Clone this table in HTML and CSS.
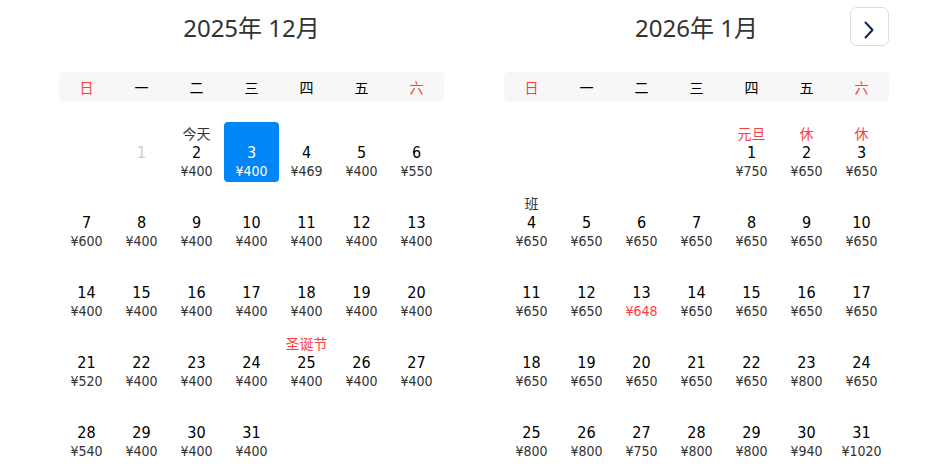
FILE: index.html
```html
<!DOCTYPE html>
<html lang="zh-CN">
<head>
<meta charset="utf-8">
<title>日历</title>
<link rel="stylesheet" href="styles.css">
</head>
<body>
<div class="page">
  <section class="cal">
    <h2 class="title">2025年 12月</h2>
    <div class="week">
      <span class="red">日</span><span>一</span><span>二</span><span>三</span><span>四</span><span>五</span><span class="red">六</span>
    </div>
    <div class="grid">
      <div class="cell empty"></div>
      <div class="cell past"><span class="tag"></span><span class="num">1</span><span class="price"></span></div>
      <div class="cell"><span class="tag">今天</span><span class="num">2</span><span class="price">¥400</span></div>
      <div class="cell sel"><span class="tag"></span><span class="num">3</span><span class="price">¥400</span></div>
      <div class="cell"><span class="tag"></span><span class="num">4</span><span class="price">¥469</span></div>
      <div class="cell"><span class="tag"></span><span class="num">5</span><span class="price">¥400</span></div>
      <div class="cell"><span class="tag"></span><span class="num">6</span><span class="price">¥550</span></div>

      <div class="cell"><span class="tag"></span><span class="num">7</span><span class="price">¥600</span></div>
      <div class="cell"><span class="tag"></span><span class="num">8</span><span class="price">¥400</span></div>
      <div class="cell"><span class="tag"></span><span class="num">9</span><span class="price">¥400</span></div>
      <div class="cell"><span class="tag"></span><span class="num">10</span><span class="price">¥400</span></div>
      <div class="cell"><span class="tag"></span><span class="num">11</span><span class="price">¥400</span></div>
      <div class="cell"><span class="tag"></span><span class="num">12</span><span class="price">¥400</span></div>
      <div class="cell"><span class="tag"></span><span class="num">13</span><span class="price">¥400</span></div>

      <div class="cell"><span class="tag"></span><span class="num">14</span><span class="price">¥400</span></div>
      <div class="cell"><span class="tag"></span><span class="num">15</span><span class="price">¥400</span></div>
      <div class="cell"><span class="tag"></span><span class="num">16</span><span class="price">¥400</span></div>
      <div class="cell"><span class="tag"></span><span class="num">17</span><span class="price">¥400</span></div>
      <div class="cell"><span class="tag"></span><span class="num">18</span><span class="price">¥400</span></div>
      <div class="cell"><span class="tag"></span><span class="num">19</span><span class="price">¥400</span></div>
      <div class="cell"><span class="tag"></span><span class="num">20</span><span class="price">¥400</span></div>

      <div class="cell"><span class="tag"></span><span class="num">21</span><span class="price">¥520</span></div>
      <div class="cell"><span class="tag"></span><span class="num">22</span><span class="price">¥400</span></div>
      <div class="cell"><span class="tag"></span><span class="num">23</span><span class="price">¥400</span></div>
      <div class="cell"><span class="tag"></span><span class="num">24</span><span class="price">¥400</span></div>
      <div class="cell"><span class="tag red">圣诞节</span><span class="num">25</span><span class="price">¥400</span></div>
      <div class="cell"><span class="tag"></span><span class="num">26</span><span class="price">¥400</span></div>
      <div class="cell"><span class="tag"></span><span class="num">27</span><span class="price">¥400</span></div>

      <div class="cell"><span class="tag"></span><span class="num">28</span><span class="price">¥540</span></div>
      <div class="cell"><span class="tag"></span><span class="num">29</span><span class="price">¥400</span></div>
      <div class="cell"><span class="tag"></span><span class="num">30</span><span class="price">¥400</span></div>
      <div class="cell"><span class="tag"></span><span class="num">31</span><span class="price">¥400</span></div>
    </div>
  </section>

  <section class="cal">
    <h2 class="title">2026年 1月</h2>
    <button class="next" type="button" aria-label="下个月">
      <svg width="39" height="39" viewBox="0 0 39 39"><polyline points="15.5,15.5 22.5,23 15.5,30.5" fill="none" stroke="#0f294d" stroke-width="2" stroke-linecap="round" stroke-linejoin="round"/></svg>
    </button>
    <div class="week">
      <span class="red">日</span><span>一</span><span>二</span><span>三</span><span>四</span><span>五</span><span class="red">六</span>
    </div>
    <div class="grid">
      <div class="cell empty"></div>
      <div class="cell empty"></div>
      <div class="cell empty"></div>
      <div class="cell empty"></div>
      <div class="cell"><span class="tag red">元旦</span><span class="num">1</span><span class="price">¥750</span></div>
      <div class="cell"><span class="tag red">休</span><span class="num">2</span><span class="price">¥650</span></div>
      <div class="cell"><span class="tag red">休</span><span class="num">3</span><span class="price">¥650</span></div>

      <div class="cell"><span class="tag">班</span><span class="num">4</span><span class="price">¥650</span></div>
      <div class="cell"><span class="tag"></span><span class="num">5</span><span class="price">¥650</span></div>
      <div class="cell"><span class="tag"></span><span class="num">6</span><span class="price">¥650</span></div>
      <div class="cell"><span class="tag"></span><span class="num">7</span><span class="price">¥650</span></div>
      <div class="cell"><span class="tag"></span><span class="num">8</span><span class="price">¥650</span></div>
      <div class="cell"><span class="tag"></span><span class="num">9</span><span class="price">¥650</span></div>
      <div class="cell"><span class="tag"></span><span class="num">10</span><span class="price">¥650</span></div>

      <div class="cell"><span class="tag"></span><span class="num">11</span><span class="price">¥650</span></div>
      <div class="cell"><span class="tag"></span><span class="num">12</span><span class="price">¥650</span></div>
      <div class="cell"><span class="tag"></span><span class="num">13</span><span class="price low">¥648</span></div>
      <div class="cell"><span class="tag"></span><span class="num">14</span><span class="price">¥650</span></div>
      <div class="cell"><span class="tag"></span><span class="num">15</span><span class="price">¥650</span></div>
      <div class="cell"><span class="tag"></span><span class="num">16</span><span class="price">¥650</span></div>
      <div class="cell"><span class="tag"></span><span class="num">17</span><span class="price">¥650</span></div>

      <div class="cell"><span class="tag"></span><span class="num">18</span><span class="price">¥650</span></div>
      <div class="cell"><span class="tag"></span><span class="num">19</span><span class="price">¥650</span></div>
      <div class="cell"><span class="tag"></span><span class="num">20</span><span class="price">¥650</span></div>
      <div class="cell"><span class="tag"></span><span class="num">21</span><span class="price">¥650</span></div>
      <div class="cell"><span class="tag"></span><span class="num">22</span><span class="price">¥650</span></div>
      <div class="cell"><span class="tag"></span><span class="num">23</span><span class="price">¥800</span></div>
      <div class="cell"><span class="tag"></span><span class="num">24</span><span class="price">¥650</span></div>

      <div class="cell"><span class="tag"></span><span class="num">25</span><span class="price">¥800</span></div>
      <div class="cell"><span class="tag"></span><span class="num">26</span><span class="price">¥800</span></div>
      <div class="cell"><span class="tag"></span><span class="num">27</span><span class="price">¥750</span></div>
      <div class="cell"><span class="tag"></span><span class="num">28</span><span class="price">¥800</span></div>
      <div class="cell"><span class="tag"></span><span class="num">29</span><span class="price">¥800</span></div>
      <div class="cell"><span class="tag"></span><span class="num">30</span><span class="price">¥940</span></div>
      <div class="cell"><span class="tag"></span><span class="num">31</span><span class="price">¥1020</span></div>
    </div>
  </section>
</div>
</body>
</html>
```

FILE: styles.css
```css
* { box-sizing: border-box; }

html, body {
  margin: 0;
  padding: 0;
  background: #fff;
}

body {
  font-family: "DejaVu Sans", "Noto Sans CJK SC", sans-serif;
  font-stretch: condensed;
  color: #000;
}

.page {
  display: flex;
  gap: 60px;
  padding-left: 59px;
}

.cal {
  position: relative;
  width: 385px;
}

.title {
  margin: 0 0 16px;
  height: 56px;
  line-height: 56px;
  text-align: center;
  font-family: "Noto Sans", "Noto Sans CJK SC", sans-serif;
  font-stretch: normal;
  font-weight: 400;
  font-size: 24px;
  color: #333;
}

.next {
  position: absolute;
  top: 7px;
  right: 0;
  width: 39px;
  height: 39px;
  padding: 0;
  border: 1px solid #ddd;
  border-radius: 7px;
  background: #fff;
  display: flex;
  align-items: center;
  justify-content: center;
}

.next svg {
  display: block;
  margin: -1px;
}

.week {
  display: grid;
  grid-template-columns: repeat(7, 1fr);
  height: 30px;
  background: #f7f7f7;
  border-radius: 5px;
  align-items: center;
  text-align: center;
  font-family: "Noto Sans CJK SC", sans-serif;
  font-stretch: normal;
  font-size: 14px;
  line-height: 30px;
  color: #000;
}

.red { color: #ff3d3d; }

.grid {
  display: grid;
  grid-template-columns: repeat(7, 55px);
  grid-auto-rows: 60px;
  row-gap: 10px;
  margin-top: 20px;
}

.cell {
  display: flex;
  flex-direction: column;
  align-items: center;
  padding-top: 2px;
  border-radius: 4px;
  text-align: center;
}

.tag {
  height: 19px;
  line-height: 19px;
  font-family: "Noto Sans CJK SC", sans-serif;
  font-stretch: normal;
  font-size: 14px;
  color: #333;
}

.tag.red { color: #ff3d3d; }

.num {
  height: 19px;
  line-height: 19px;
  font-size: 16px;
  color: #000;
}

.price {
  height: 18px;
  line-height: 18px;
  font-size: 14px;
  color: #333;
}

.price.low { color: #ff3d3d; }

.past .num { color: #ccc; }

.sel {
  background: #0086f6;
}

.sel .num, .sel .price { color: #fff; }
```
